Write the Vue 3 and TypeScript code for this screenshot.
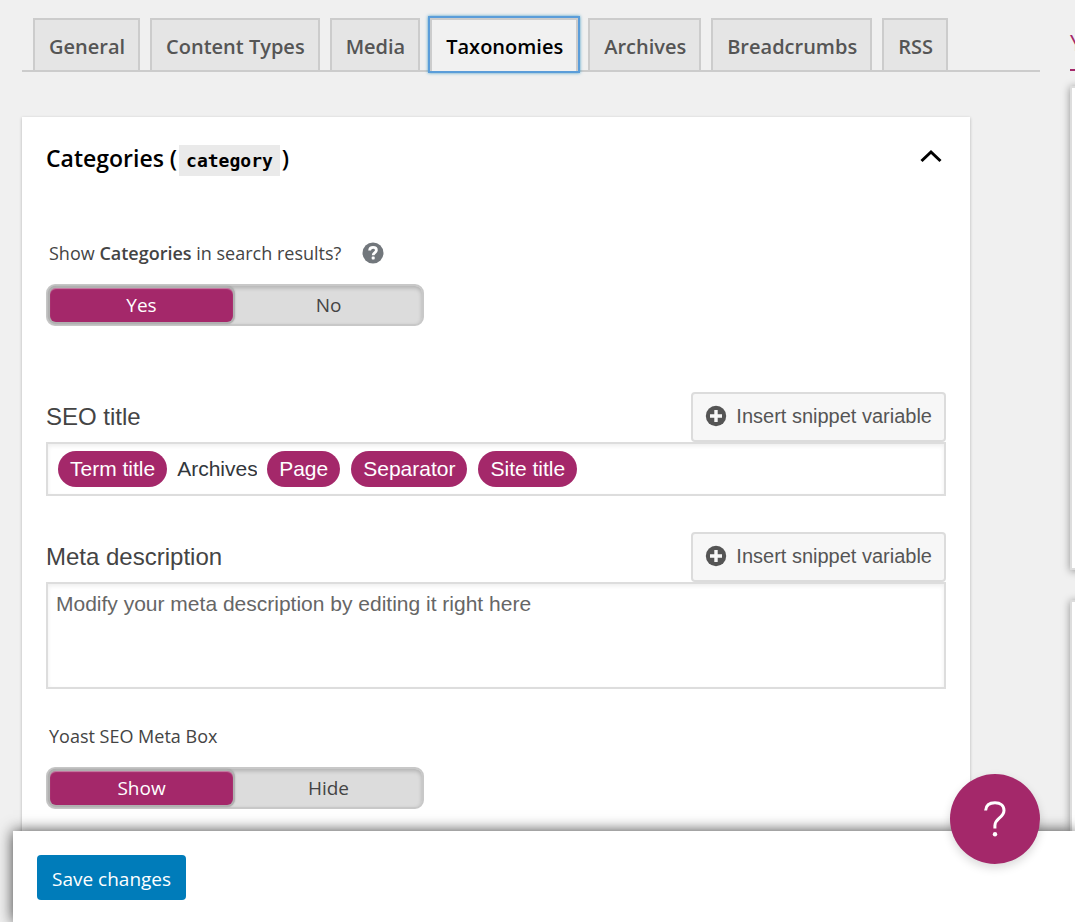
<script setup lang="ts">
import { ref } from 'vue'

const tabs: string[] = ['General', 'Content Types', 'Media', 'Taxonomies', 'Archives', 'Breadcrumbs', 'RSS']
const activeTab = ref('Taxonomies')
const showInSearch = ref('Yes')
const metaBox = ref('Show')
const titleText = ref('Archives')
const metaDescription = ref('')
const expanded = ref(true)
</script>

<template>
  <div class="page">
    <div class="content">
      <main class="settings">
        <nav class="tabs">
          <a
            v-for="tab in tabs"
            :key="tab"
            href="#"
            class="tab"
            :class="{ active: tab === activeTab }"
            @click.prevent="activeTab = tab"
          >{{ tab }}</a>
        </nav>

        <section class="card">
          <header class="card-head">
            <h2>Categories (<code>category</code>)</h2>
            <button type="button" class="collapse" aria-label="Toggle Categories" @click="expanded = !expanded">
              <svg width="22" height="14" viewBox="0 0 22 14">
                <path d="M1.5 12 L11 3 L20.5 12" fill="none" stroke="#000" stroke-width="3" />
              </svg>
            </button>
          </header>

          <template v-if="expanded">
            <fieldset class="toggle-group search-toggle">
              <legend>
                <span>Show <strong>Categories</strong> in search results?</span>
                <button type="button" class="help" aria-label="Help">
                  <svg width="22" height="22" viewBox="0 0 22 22">
                    <circle cx="11" cy="11" r="10.5" fill="#72777c" />
                    <path
                      d="M7.6 8.5 C7.7 6.5 9.1 5.4 11.1 5.4 C13.1 5.4 14.4 6.5 14.4 8.2 C14.4 10.6 11.2 10.5 11.2 13.2"
                      fill="none"
                      stroke="#fff"
                      stroke-width="2.8"
                    />
                    <rect x="9.7" y="14.6" width="3" height="3" rx="0.8" fill="#fff" />
                  </svg>
                </button>
              </legend>
              <div class="switch">
                <label v-for="option in ['Yes', 'No']" :key="option" :class="{ on: showInSearch === option }">
                  <input v-model="showInSearch" type="radio" name="search" :value="option" />{{ option }}
                </label>
              </div>
            </fieldset>

            <div class="field title-field">
              <div class="field-head">
                <label for="seo-title">SEO title</label>
                <button type="button" class="insert">
                  <svg width="22" height="22" viewBox="0 0 22 22">
                    <circle cx="11" cy="11" r="10.2" fill="#555" />
                    <path d="M11 5 V17 M5 11 H17" stroke="#f7f7f7" stroke-width="3.4" />
                  </svg>
                  Insert snippet variable
                </button>
              </div>
              <div class="editor title-editor">
                <span class="chip">Term title</span>
                <input id="seo-title" v-model="titleText" type="text" />
                <span class="chip">Page</span>
                <span class="chip">Separator</span>
                <span class="chip">Site title</span>
              </div>
            </div>

            <div class="field meta-field">
              <div class="field-head">
                <label for="meta-description">Meta description</label>
                <button type="button" class="insert">
                  <svg width="22" height="22" viewBox="0 0 22 22">
                    <circle cx="11" cy="11" r="10.2" fill="#555" />
                    <path d="M11 5 V17 M5 11 H17" stroke="#f7f7f7" stroke-width="3.4" />
                  </svg>
                  Insert snippet variable
                </button>
              </div>
              <textarea
                id="meta-description"
                v-model="metaDescription"
                class="editor"
                placeholder="Modify your meta description by editing it right here"
              ></textarea>
            </div>

            <fieldset class="toggle-group">
              <legend>Yoast SEO Meta Box</legend>
              <div class="switch">
                <label v-for="option in ['Show', 'Hide']" :key="option" :class="{ on: metaBox === option }">
                  <input v-model="metaBox" type="radio" name="metabox" :value="option" />{{ option }}
                </label>
              </div>
            </fieldset>
          </template>
        </section>
      </main>

      <aside class="sidebar">
        <h2>Y</h2>
        <div class="promo"></div>
        <div class="promo"></div>
      </aside>
    </div>

    <footer class="save-bar">
      <button type="submit" class="save">Save changes</button>
    </footer>

    <button type="button" class="beacon" aria-label="Open help">
      <svg width="24" height="36" viewBox="0 0 24 36">
        <path
          d="M2.6 9.5 C3 4.5 6.6 1.8 12 1.8 C17.6 1.8 21 4.8 21 9.4 C21 13 18.8 15 16 17.4 C13 20 11.9 21.4 11.9 24.5 V27.5"
          fill="none"
          stroke="#fff"
          stroke-width="3"
        />
        <circle cx="12" cy="33.2" r="2.2" fill="#fff" />
      </svg>
    </button>
  </div>
</template>

<style>
body {
  margin: 0;
  background: #f0f0f0;
}
</style>

<style scoped>
* {
  box-sizing: border-box;
}

.page {
  height: 100vh;
  display: flex;
  flex-direction: column;
  overflow: hidden;
  background: #f0f0f0;
  color: #444;
  font-family: 'Open Sans', 'Noto Sans', sans-serif;
  font-size: 19px;
  line-height: 28px;
}

button {
  font: inherit;
  cursor: pointer;
}

.content {
  flex: 1;
  min-height: 0;
  display: flex;
  gap: 30px;
  padding-left: 22px;
  overflow: hidden;
}

.settings {
  flex: 1;
  min-width: 0;
}

.tabs {
  display: flex;
  gap: 10px;
  padding: 18px 11px 0;
  border-bottom: 2px solid #ccc;
}

.tab {
  height: 52px;
  padding: 13px 13px 11px 14px;
  border: 2px solid #ccc;
  border-bottom: 0;
  background: #e5e5e5;
  color: #555;
  font-size: 20px;
  font-weight: 600;
  text-decoration: none;
  white-space: nowrap;
}

.tab.active {
  height: 53px;
  margin-bottom: -1px;
  background: #f1f1f1;
  color: #000;
  box-shadow: 0 0 0 2px #5b9dd9, 0 0 3px 2px rgba(30, 140, 190, 0.8);
}

.card {
  margin: 45px 70px 0 0;
  padding: 24px;
  min-height: 900px;
  background: #fff;
  box-shadow: 0 1px 3px rgba(0, 0, 0, 0.25);
}

.card-head {
  display: flex;
  justify-content: space-between;
  align-items: flex-start;
  height: 36px;
}

h2 {
  margin: 0;
  font-weight: 600;
}

.card-head h2 {
  color: #000;
  font-size: 23px;
  line-height: 34px;
}

code {
  margin: 0 2px;
  padding: 5px 7px;
  background: #eaeaea;
  font-family: 'DejaVu Sans Mono', monospace;
  font-size: 18px;
  font-weight: 700;
}

.collapse {
  display: flex;
  margin: 8px 4px 0 0;
  padding: 0;
  border: 0;
  background: none;
}

.toggle-group {
  margin: 0;
  padding: 0;
  border: 0;
}

.search-toggle {
  margin-top: 62px;
}

legend {
  display: flex;
  align-items: center;
  gap: 21px;
  margin-bottom: 17px;
  padding: 0 3px;
  font-size: 18px;
}

strong {
  font-weight: 600;
}

.help {
  display: flex;
  padding: 0;
  border: 0;
  background: none;
}

.switch {
  display: flex;
  gap: 4px;
  width: 378px;
  height: 42px;
  padding: 2px;
  border: 2px solid #c8c8c8;
  border-radius: 9px;
  background: #dcdcdc;
  box-shadow: inset 0 2px 4px rgba(0, 0, 0, 0.2);
}

.switch label {
  position: relative;
  flex: 1;
  border-radius: 6px;
  color: #444;
  line-height: 34px;
  text-align: center;
}

.switch label.on {
  background: #a4286a;
  color: #fff;
  box-shadow: 0 0 0 2px #b0b0b0, 0 0 2px 2px rgba(0, 0, 0, 0.2), inset 0 1px 1px rgba(255, 255, 255, 0.4);
}

.switch input {
  position: absolute;
  inset: 0;
  margin: 0;
  opacity: 0;
}

.title-field {
  margin-top: 66px;
}

.meta-field {
  margin: 36px 0 33px;
}

.field {
  font-family: 'Liberation Sans', Arial, sans-serif;
}

.field-head {
  display: flex;
  justify-content: space-between;
  align-items: center;
  font-size: 24px;
}

.insert {
  display: flex;
  align-items: center;
  gap: 9px;
  height: 50px;
  padding: 0 12px 2px 12px;
  border: 2px solid #dcdcdc;
  border-radius: 4px;
  background: #f7f7f7;
  color: #555;
  font-size: 20px;
}

.editor {
  display: block;
  width: 100%;
  border: 2px solid #ddd;
  background: #fff;
  box-shadow: inset 0 2px 4px rgba(0, 0, 0, 0.07);
  color: #32373c;
  font-size: 21px;
}

.title-editor {
  display: flex;
  align-items: center;
  gap: 11px;
  height: 54px;
  padding: 0 10px;
}

.title-editor input {
  width: 80px;
  margin: 0 -1px;
  padding: 0;
  border: 0;
  outline: 0;
  background: none;
  color: inherit;
  font: inherit;
}

.chip {
  height: 36px;
  padding: 0 12px;
  border-radius: 18px;
  background: #a4286a;
  color: #fff;
  line-height: 36px;
}

textarea.editor {
  height: 107px;
  padding: 6px 8px;
  font-family: inherit;
  line-height: 28px;
  resize: none;
}

textarea::placeholder {
  color: #666;
}

.sidebar {
  flex: none;
  width: 5px;
}

.sidebar h2 {
  width: 300px;
  height: 71px;
  margin-bottom: 15px;
  padding-top: 28px;
  border-bottom: 2px solid #a4286a;
  color: #a4286a;
  font-size: 22px;
  font-weight: 400;
}

.promo {
  width: 300px;
  height: 484px;
  margin-bottom: 30px;
  border: 2px solid #ddd;
  background: #fff;
  box-shadow: 0 1px 8px rgba(0, 0, 0, 0.4);
}

.save-bar {
  position: relative;
  flex: none;
  margin-left: 13px;
  padding: 24px 24px 22px;
  background: #fff;
  box-shadow: 0 0 14px rgba(0, 0, 0, 0.75);
}

.save {
  display: block;
  height: 45px;
  padding: 2px 15px 0;
  border: 0;
  border-radius: 4px;
  background: #007cba;
  color: #fff;
}

.beacon {
  position: fixed;
  right: 35px;
  bottom: 58px;
  display: flex;
  align-items: center;
  justify-content: center;
  width: 90px;
  height: 90px;
  padding: 0;
  border: 0;
  border-radius: 50%;
  background: #a4286a;
  box-shadow: 0 4px 10px rgba(0, 0, 0, 0.15);
}
</style>
